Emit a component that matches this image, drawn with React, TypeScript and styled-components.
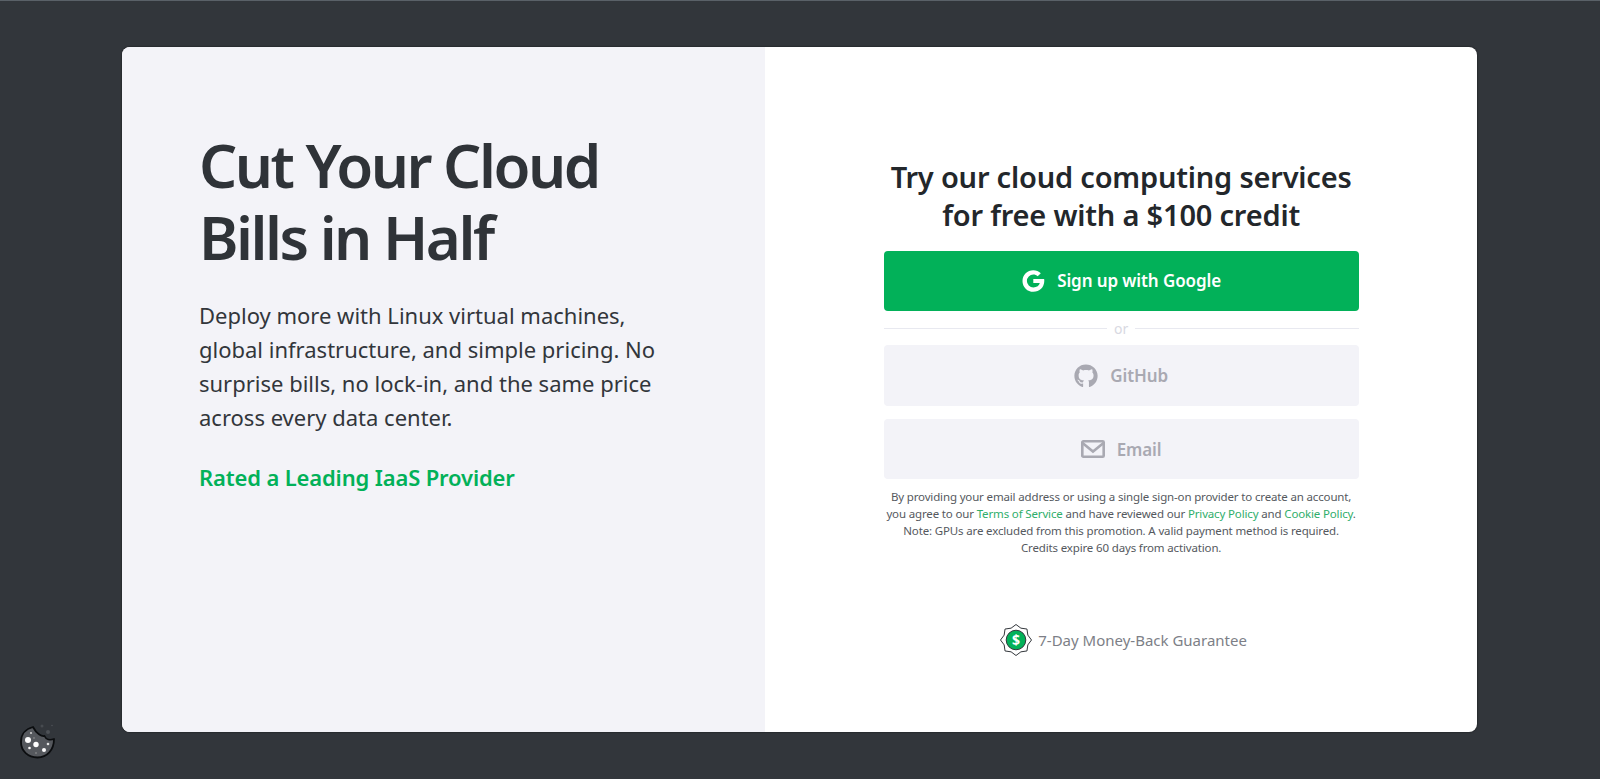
import React from 'react'
import styled, { createGlobalStyle } from 'styled-components'
import { FaGithub } from 'react-icons/fa'

const GlobalStyle = createGlobalStyle`
  html, body {
    margin: 0;
    padding: 0;
    background: #32363b;
  }
  body {
    font-family: "Noto Sans", "Open Sans", sans-serif;
  }
`

const GoogleIcon = () => (
  <svg width="24" height="24" viewBox="0 0 24 24" fill="#fff">
    <path d="M12.3 10v4.1h6.5c-.6 2.600-2.900 4.300-6.500 4.300a6.400 6.400 0 1 1 0-12.800c1.700 0 3.200.6 4.400 1.700l3.100-3.100C17.800 2.300 15.200 1.200 12.300 1.200a10.800 10.800 0 1 0 0 21.600c6.200 0 11-4.400 11-11 0-.6 0-1.200-.2-1.800z" />
  </svg>
)

const MailIcon = () => (
  <svg width="24" height="18" viewBox="0 0 24 18" fill="none" stroke="#a9a9b2" strokeWidth="2.600">
    <rect x="1.300" y="1.300" width="21.400" height="15.400" rx="1" />
    <path d="M1.500 3 12 11.500 22.500 3" />
  </svg>
)

// eight pointed seal round the dollar coin
const sealPoints = Array.from({ length: 16 }, (_, i) => {
  const angle = (i * Math.PI) / 8 - Math.PI / 2
  const r = i % 2 === 0 ? 15.500 : 12.800
  return `${(17 + r * Math.cos(angle)).toFixed(2)},${(17 + r * Math.sin(angle)).toFixed(2)}`
}).join(' ')

const BadgeIcon = () => (
  <svg width="34" height="34" viewBox="0 0 34 34">
    <polygon points={sealPoints} fill="#fff" stroke="#33373c" strokeWidth="1" strokeLinejoin="round" />
    <circle cx="17" cy="17" r="9.800" fill="#02b159" stroke="#33373c" strokeWidth="1" />
    <text x="17" y="22" textAnchor="middle" fontSize="14" fontWeight="700" fill="#fff" fontFamily="Noto Sans, sans-serif">$</text>
  </svg>
)

const CookieIcon = () => (
  <svg width="36" height="36" viewBox="0 0 36 36">
    <path
      d="M14 4C6 6 2 12 2 19c0 9 7 15.500 16.500 15.500C28 34.500 35 27 35 16c-4 1.500-8 .5-9.500-3-3 .5-8-2-11.500-9z"
      fill="#55585d"
      stroke="#0b0d0f"
      strokeWidth="1.800"
      strokeLinejoin="round"
    />
    <circle cx="9" cy="17" r="3" fill="#fff" />
    <circle cx="17" cy="21.500" r="2.700" fill="#fff" />
    <circle cx="25" cy="27" r="2" fill="#fff" />
    <circle cx="10.500" cy="25" r="1.300" fill="#fff" />
    <circle cx="29" cy="21" r="1.300" fill="#e4e4e4" />
    <circle cx="12" cy="10" r="1.100" fill="#ccc" />
    <circle cx="15" cy="15" r=".7" fill="#aaa" />
    <circle cx="17" cy="30" r=".7" fill="#aaa" />
    <circle cx="29" cy="9" r="2" fill="#4d5156" />
    <circle cx="23" cy="3" r="1.500" fill="#474b50" />
    <circle cx="33" cy="2.500" r=".8" fill="#4d5156" />
  </svg>
)

export default function App() {
  return (
    <Page>
      <GlobalStyle />
      <TopLine />
      <Card>
        <PromoPanel>
          <Title>Cut Your Cloud<br />Bills in Half</Title>
          <Lead>
            Deploy more with Linux virtual machines, global infrastructure, and simple pricing. No
            surprise bills, no lock-in, and the same price across every data center.
          </Lead>
          <Rated>Rated a Leading IaaS Provider</Rated>
        </PromoPanel>
        <SignupPanel>
          <SignupTitle>Try our cloud computing services for free with a $100 credit</SignupTitle>
          <ButtonStack>
            <ProviderButton $primary>
              <GoogleIcon />
              <ButtonLabel $primary>Sign up with Google</ButtonLabel>
            </ProviderButton>
            <OrDivider><OrText>or</OrText></OrDivider>
            <ProviderButton>
              <FaGithub size={24} />
              <ButtonLabel>GitHub</ButtonLabel>
            </ProviderButton>
            <ProviderButton $spaced>
              <MailIcon />
              <ButtonLabel>Email</ButtonLabel>
            </ProviderButton>
          </ButtonStack>
          <Legal>
            By providing your email address or using a single sign-on provider to create an account,
            you agree to our <LegalLink>Terms of Service</LegalLink> and have reviewed our{' '}
            <LegalLink>Privacy Policy</LegalLink> and <LegalLink>Cookie Policy</LegalLink>.
            <br />
            Note: GPUs are excluded from this promotion. A valid payment method is required.
            <br />
            Credits expire 60 days from activation.
          </Legal>
          <Guarantee>
            <BadgeIcon />
            7-Day Money-Back Guarantee
          </Guarantee>
        </SignupPanel>
      </Card>
      <CookieButton aria-label="Cookie preferences">
        <CookieIcon />
      </CookieButton>
    </Page>
  )
}

const Page = styled.div`
  position: relative;
  height: 779px;
  box-sizing: border-box;
  padding: 46.700px 122.800px 47.300px 122.400px;
  overflow: hidden;
`

const TopLine = styled.div`
  position: absolute;
  top: 0;
  left: 0;
  right: 0;
  height: 1px;
  background: #5a6168;
`

const Card = styled.div`
  display: flex;
  height: 685px;
  border-radius: 8px;
  overflow: hidden;
  background: #fff;
  box-shadow: 0 0 2px rgba(0, 0, 0, 0.7);
`

const PromoPanel = styled.div`
  width: 642.600px;
  box-sizing: border-box;
  padding: 82.300px 100px 0 76.600px;
  background: #f3f3f8;
`

const Title = styled.h1`
  margin: 0;
  font-size: 60px;
  font-weight: 600;
  line-height: 72px;
  letter-spacing: -2.500px;
  color: #2f3338;
`

const Lead = styled.p`
  margin: 25px 0 0;
  font-size: 22px;
  line-height: 34px;
  color: #32363b;
`

const Rated = styled.p`
  margin: 26px 0 0;
  font-size: 22px;
  font-weight: 600;
  line-height: 34px;
  letter-spacing: -0.150px;
  color: #02b159;
`

const SignupPanel = styled.div`
  flex: 1;
  display: flex;
  flex-direction: column;
  align-items: center;
  padding-top: 111.300px;
`

const SignupTitle = styled.h2`
  width: 475px;
  margin: 0;
  font-size: 29px;
  font-weight: 600;
  line-height: 38px;
  letter-spacing: -0.200px;
  text-align: center;
  color: #23272b;
`

const ButtonStack = styled.div`
  width: 475px;
  margin-top: 17px;
`

const ProviderButton = styled.button<{ $primary?: boolean; $spaced?: boolean }>`
  display: flex;
  align-items: center;
  justify-content: center;
  gap: 12px;
  width: 100%;
  height: 60.500px;
  margin-top: ${(p) => (p.$spaced ? '13px' : '0')};
  border: 0;
  border-radius: 4px;
  font-family: inherit;
  font-size: 17px;
  font-weight: 600;
  letter-spacing: -0.100px;
  background: ${(p) => (p.$primary ? '#02b159' : '#f3f3f8')};
  color: ${(p) => (p.$primary ? '#fff' : '#a9a9b2')};
`

const ButtonLabel = styled.span<{ $primary?: boolean }>`
  margin-bottom: ${(p) => (p.$primary ? '2px' : '0')};
`

const OrDivider = styled.div`
  display: flex;
  align-items: center;
  justify-content: center;
  gap: 7px;
  height: 34px;
  &::before,
  &::after {
    content: '';
    flex: 1;
    height: 1px;
    background: #e8e9f0;
  }
`

const OrText = styled.span`
  font-size: 14px;
  color: #d8d9e2;
`

const Legal = styled.p`
  width: 475px;
  margin: 9px 0 0;
  font-size: 11.500px;
  line-height: 17px;
  letter-spacing: -0.150px;
  text-align: center;
  color: #55595e;
`

const LegalLink = styled.span`
  color: #2fae6b;
`

const Guarantee = styled.div`
  display: flex;
  align-items: center;
  gap: 5px;
  margin: 67px 0 0 4px;
  font-size: 15px;
  color: #7d7f87;
`

const CookieButton = styled.div`
  position: absolute;
  left: 18.500px;
  bottom: 20px;
  width: 36px;
  height: 36px;
`
